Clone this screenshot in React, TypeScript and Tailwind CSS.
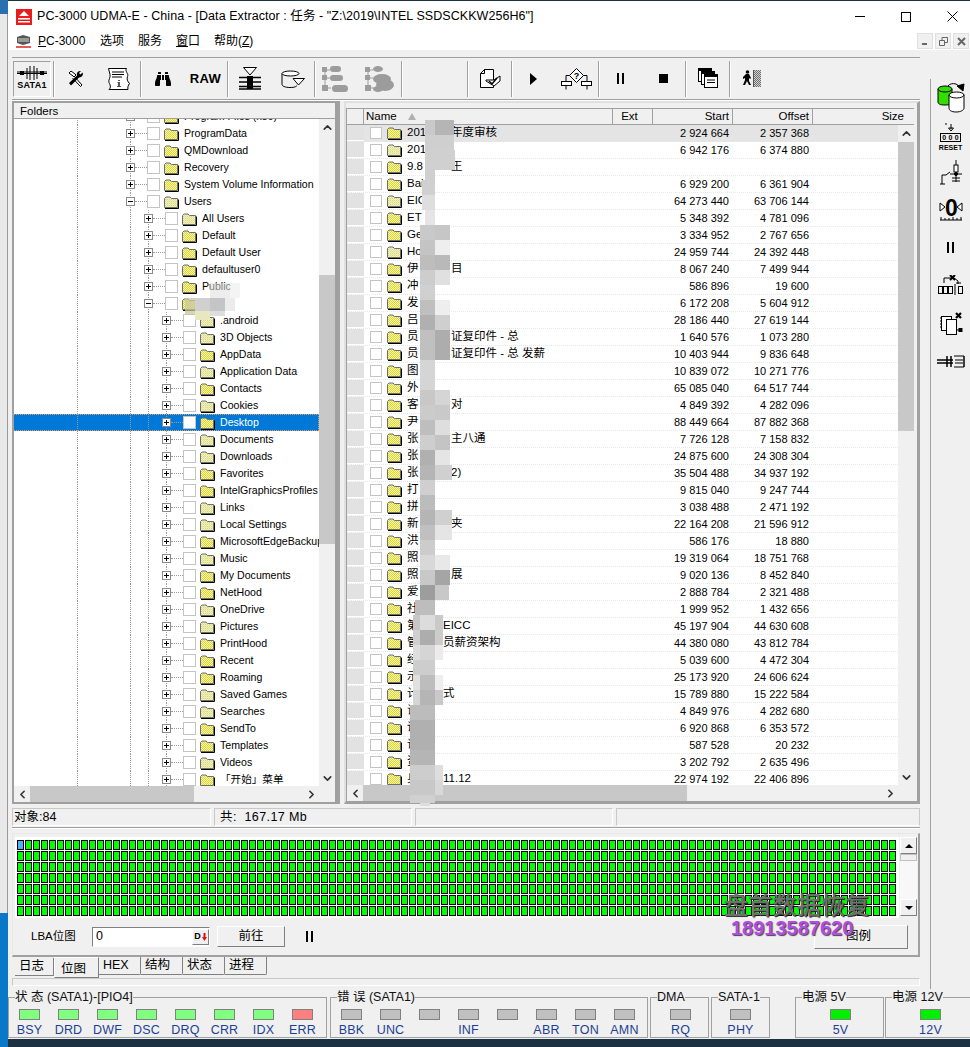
import React from 'react';
import { FaBinoculars } from 'react-icons/fa';
import { ChevronUp, ChevronDown, ChevronLeft, ChevronRight } from 'lucide-react';

const dotV = 'bg-[linear-gradient(#9a9a9a_50%,transparent_50%)] bg-[length:1px_2px] bg-repeat-y';

type TreeRow = { name: string; level: number; pale?: boolean; open?: boolean; sel?: boolean };

const treeRows: TreeRow[] = [
  { name: 'Program Files (x86)', level: 0 },
  { name: 'ProgramData', level: 0 },
  { name: 'QMDownload', level: 0 },
  { name: 'Recovery', level: 0 },
  { name: 'System Volume Information', level: 0 },
  { name: 'Users', level: 0, open: true, pale: true },
  { name: 'All Users', level: 1, pale: true },
  { name: 'Default', level: 1 },
  { name: 'Default User', level: 1 },
  { name: 'defaultuser0', level: 1 },
  { name: 'Public', level: 1 },
  { name: '', level: 1, open: true },
  { name: '.android', level: 2, pale: true },
  { name: '3D Objects', level: 2, pale: true },
  { name: 'AppData', level: 2 },
  { name: 'Application Data', level: 2, pale: true },
  { name: 'Contacts', level: 2 },
  { name: 'Cookies', level: 2, pale: true },
  { name: 'Desktop', level: 2, sel: true },
  { name: 'Documents', level: 2, pale: true },
  { name: 'Downloads', level: 2, pale: true },
  { name: 'Favorites', level: 2 },
  { name: 'IntelGraphicsProfiles', level: 2 },
  { name: 'Links', level: 2, pale: true },
  { name: 'Local Settings', level: 2, pale: true },
  { name: 'MicrosoftEdgeBackups', level: 2 },
  { name: 'Music', level: 2, pale: true },
  { name: 'My Documents', level: 2 },
  { name: 'NetHood', level: 2 },
  { name: 'OneDrive', level: 2, pale: true },
  { name: 'Pictures', level: 2, pale: true },
  { name: 'PrintHood', level: 2 },
  { name: 'Recent', level: 2 },
  { name: 'Roaming', level: 2 },
  { name: 'Saved Games', level: 2, pale: true },
  { name: 'Searches', level: 2, pale: true },
  { name: 'SendTo', level: 2 },
  { name: 'Templates', level: 2 },
  { name: 'Videos', level: 2, pale: true },
  { name: '「开始」菜单', level: 2 },
];

// name, part behind the mosaic, start, offset, pale folder
const listRows: [string, string, string, string, boolean?][] = [
  ['201', '年度审核', '2 924 664', '2 357 368'],
  ['201', '', '6 942 176', '6 374 880', true],
  ['9.8', '王', '', ''],
  ['Bai', '', '6 929 200', '6 361 904'],
  ['EIC', '', '64 273 440', '63 706 144', true],
  ['ET', '', '5 348 392', '4 781 096'],
  ['Ge', '', '3 334 952', '2 767 656'],
  ['Ho', '', '24 959 744', '24 392 448', true],
  ['伊', '目', '8 067 240', '7 499 944'],
  ['冲', '', '586 896', '19 600'],
  ['发', '', '6 172 208', '5 604 912'],
  ['吕', '', '28 186 440', '27 619 144'],
  ['员', '证复印件 - 总', '1 640 576', '1 073 280'],
  ['员', '证复印件 - 总 发薪', '10 403 944', '9 836 648'],
  ['图', '', '10 839 072', '10 271 776'],
  ['外', '', '65 085 040', '64 517 744'],
  ['客', '对', '4 849 392', '4 282 096'],
  ['尹', '', '88 449 664', '87 882 368'],
  ['张', '主八通', '7 726 128', '7 158 832'],
  ['张', '', '24 875 600', '24 308 304'],
  ['张', '2)', '35 504 488', '34 937 192'],
  ['打', '', '9 815 040', '9 247 744'],
  ['拼', '', '3 038 488', '2 471 192'],
  ['新', '夹', '22 164 208', '21 596 912'],
  ['洪', '', '586 176', '18 880'],
  ['照', '', '19 319 064', '18 751 768'],
  ['照', '展', '9 020 136', '8 452 840'],
  ['爱', '', '2 888 784', '2 321 488'],
  ['社', '', '1 999 952', '1 432 656'],
  ['第', 'EICC', '45 197 904', '44 630 608'],
  ['管', '员薪资架构', '44 380 080', '43 812 784'],
  ['经', '', '5 039 600', '4 472 304'],
  ['示', '', '25 173 920', '24 606 624'],
  ['计', '式', '15 789 880', '15 222 584'],
  ['试', '', '4 849 976', '4 282 680'],
  ['说', '', '6 920 868', '6 353 572'],
  ['议', '', '587 528', '20 232'],
  ['资', '', '3 202 792', '2 635 496'],
  ['身', '11.12', '22 974 192', '22 406 896'],
];

// privacy mosaic that covers the names in the picture: x, y, w, h, colour
const mosaic: [number, number, number, number, string][] = [
  [425, 120, 10, 15, '#c9c9c9'], [435, 120, 19, 15, '#b5b5b5'], [425, 135, 10, 15, '#cfcfcf'], [435, 135, 19, 15, '#cfcfcf'],
  [425, 150, 30, 20, '#d0d0d0'], [425, 170, 10, 10, '#cfcfcf'], [422, 180, 13, 15, '#d0d0d0'], [422, 195, 13, 15, '#dedede'],
  [425, 210, 10, 15, '#e5e5e5'], [420, 225, 15, 15, '#c9c9c9'], [435, 225, 15, 15, '#c6c6c6'], [420, 240, 15, 15, '#c4c4c4'],
  [435, 240, 15, 15, '#eeeeee'], [420, 255, 15, 15, '#bdbdbd'], [435, 255, 15, 15, '#b9b9b9'], [420, 270, 15, 15, '#cdcdcd'],
  [435, 270, 15, 15, '#e0e0e0'], [420, 285, 15, 15, '#d0d0d0'], [420, 300, 15, 15, '#bfbfbf'], [435, 300, 15, 15, '#eeeeee'],
  [420, 315, 15, 15, '#b0b0b0'], [435, 315, 15, 15, '#cfcfcf'], [420, 330, 15, 30, '#c0c0c0'], [435, 330, 15, 30, '#adadad'],
  [420, 360, 15, 30, '#d5d5d5'], [435, 390, 15, 15, '#d5d5d5'], [420, 390, 15, 15, '#c8c8c8'], [420, 405, 15, 15, '#cbcbcb'],
  [435, 405, 15, 15, '#c9c9c9'], [420, 420, 15, 15, '#bebebe'], [435, 420, 15, 15, '#dedede'], [420, 435, 15, 15, '#cecece'],
  [435, 435, 15, 15, '#c4c4c4'], [420, 450, 15, 15, '#b0b0b0'], [435, 450, 15, 15, '#e5e5e5'], [420, 465, 15, 15, '#b5b5b5'],
  [435, 465, 17, 15, '#d0d0d0'], [420, 480, 15, 15, '#cfcfcf'], [420, 495, 15, 15, '#bcbcbc'], [420, 510, 15, 15, '#b5b5b5'],
  [435, 510, 17, 15, '#d0d0d0'], [420, 525, 15, 15, '#c0c0c0'], [435, 525, 17, 15, '#e5e5e5'], [420, 540, 15, 15, '#cccccc'],
  [420, 555, 15, 15, '#d8d8d8'], [435, 555, 15, 15, '#e8e8e8'], [420, 570, 15, 15, '#c8c8c8'], [435, 570, 15, 15, '#a5a5a5'],
  [420, 585, 15, 15, '#9d9d9d'], [435, 585, 14, 15, '#c8c8c8'], [415, 600, 20, 15, '#bdbdbd'], [413, 615, 7, 15, '#c6c6c6'],
  [420, 615, 15, 15, '#dcdcdc'], [435, 615, 8, 15, '#c9c9c9'], [413, 630, 7, 15, '#cfcfcf'], [420, 630, 15, 15, '#adadad'],
  [435, 630, 8, 15, '#cccccc'], [413, 645, 7, 15, '#dedede'], [420, 645, 15, 15, '#d5d5d5'], [435, 645, 8, 15, '#ebebeb'],
  [413, 660, 22, 15, '#cdcdcd'], [413, 675, 7, 15, '#e0e0e0'], [420, 675, 15, 15, '#bdbdbd'], [435, 675, 8, 15, '#eeeeee'],
  [413, 690, 7, 15, '#d5d5d5'], [420, 690, 15, 15, '#b5b5b5'], [435, 690, 8, 15, '#c9c9c9'], [410, 705, 25, 15, '#bcbcbc'],
  [410, 720, 25, 30, '#b0b0b0'], [410, 750, 25, 15, '#b5b5b5'], [410, 765, 25, 15, '#cdcdcd'], [435, 765, 8, 15, '#dedede'],
  [410, 780, 25, 15, '#c8c8c8'], [435, 780, 8, 15, '#d8d8d8'], [410, 795, 25, 8, '#d0d0d0'], [420, 803, 10, 3, '#dddddd'],
  // over the tree
  [210, 283, 20, 15, '#e0e0e090'], [230, 283, 10, 15, '#f0f0f0c0'], [185, 298, 10, 17, '#c8c8a0c0'], [195, 298, 15, 13, '#d0d0d0'],
  [210, 298, 15, 13, '#c5c5c5'], [225, 298, 10, 13, '#ececec'], [195, 311, 15, 9, '#e8e8c0'], [210, 311, 15, 5, '#dddddd'],
];

const Folder = ({ pale }: { pale?: boolean }) => (
  <svg width="16" height="14" viewBox="0 0 16 14" className="shrink-0">
    <path d="M1.5 12.5V3.5L3 2h4l1.5 1.5h6v9z" fill={pale ? 'url(#dPale)' : 'url(#dYel)'} stroke="#6e6e6e" />
    <path d="M2 13.5h13.5V4.5" fill="none" stroke="#000" />
  </svg>
);

const Check = ({ size = 13 }: { size?: number }) => (
  <div className="shrink-0 bg-white border border-[#c4c4c4]" style={{ width: size, height: size }} />
);

const Expander = ({ open }: { open?: boolean }) => (
  <div className={`w-[9px] h-full flex items-center justify-center shrink-0 ${dotV} bg-[position:4px_0]`}>
    <div className="w-[9px] h-[9px] bg-white border border-[#8a8a8a] relative flex items-center justify-center">
      <div className="w-[5px] h-px bg-black" />
      {!open && <div className="absolute w-px h-[5px] bg-black" />}
    </div>
  </div>
);

const TreeItem = ({ row }: { row: TreeRow }) => (
  <div
    className={`flex h-[17px] items-center pl-[63px] ${
      row.sel ? 'bg-[#0078d7] text-white outline outline-1 -outline-offset-1 outline-dotted outline-[#e8a060]' : ''
    }`}
  >
    <div className={`w-[50px] h-full shrink-0 ${dotV} bg-[position:1px_0]`} />
    {row.level >= 1 && <div className={`w-[18px] h-full shrink-0 ${dotV} bg-[position:4px_0]`} />}
    {row.level >= 2 && <div className={`w-[18px] h-full shrink-0 ${dotV} bg-[position:4px_0]`} />}
    <Expander open={row.open} />
    <div className="w-[12px] h-px border-t border-dotted border-[#9a9a9a] shrink-0" />
    <Check />
    <div className="w-[3px] shrink-0" />
    <Folder pale={row.pale} />
    <span className="ml-[5px] whitespace-nowrap text-[10.6px]">{row.name}</span>
  </div>
);

const ScrollCap = ({ children }: { children: React.ReactNode }) => (
  <div className="w-[16px] h-[16px] shrink-0 flex items-center justify-center text-[#333]">{children}</div>
);

const VScroll = ({ top, thumb }: { top: number; thumb: number }) => (
  <div className="w-[16px] h-full flex flex-col bg-[#f0f0f0] shrink-0">
    <ScrollCap><ChevronUp size={13} strokeWidth={3} /></ScrollCap>
    <div className="flex-1 min-h-0">
      <div className="bg-[#c8c8c8]" style={{ marginTop: top, height: thumb }} />
    </div>
    <ScrollCap><ChevronDown size={13} strokeWidth={3} /></ScrollCap>
  </div>
);

const HScroll = ({ left, thumb }: { left: number; thumb: number }) => (
  <div className="h-[16px] flex bg-[#f0f0f0] shrink-0 flex-1 min-w-0">
    <ScrollCap><ChevronLeft size={13} strokeWidth={3} /></ScrollCap>
    <div className="flex-1 min-w-0">
      <div className="bg-[#c8c8c8] h-full" style={{ marginLeft: left, width: thumb }} />
    </div>
    <ScrollCap><ChevronRight size={13} strokeWidth={3} /></ScrollCap>
  </div>
);

const Sata = () => (
  <svg width="32" height="14" viewBox="0 0 32 14">
    <path d="M1 6h30M1 7.5h30" stroke="#000" strokeWidth="1.2" />
    <path d="M11 2v11M14 0v14M18 0v14M21 2v11" stroke="#000" />
    <rect x="4" y="5" width="4" height="4" fill="#000" />
    <rect x="24" y="5" width="4" height="4" fill="#000" />
  </svg>
);

const ToolsIcon = () => (
  <svg width="17" height="17" viewBox="0 0 17 17">
    <path d="M2 3l2-2 4 3 1 1-2 2-1-1zM7 6l8 9-1.500 1.500L5.500 8" fill="#fff" stroke="#000" />
    <path d="M15.500 2.500l-2 2-1.500-1.500 2-2a3.500 3.500 0 0 0-4 4.500L2 13l2 2.500 8-8a3.500 3.500 0 0 0 3.500-5z" fill="#000" />
  </svg>
);

const ScrollIcon = () => (
  <svg width="24" height="24" viewBox="0 0 24 24" fill="none" stroke="#000">
    <path d="M1.500 1.500h18c-2 3 2.500 5 1 8-1 2.500 0 5 2 7-1.500 2-2 4-1.500 6h-19c2.500-2 1-5 0-7-1-3 2-5 1-8-.5-2-1-4-1.500-6z" fill="#fff" />
    <path d="M5 5h12M5 7.500h12M5 10h10" />
    <path d="M11 13h2v1h-2zM10.500 15h2.500v4h1v1h-4v-1h1v-3h-.5z" fill="#555" stroke="none" />
  </svg>
);

const FunnelStack = () => (
  <svg width="24" height="24" viewBox="0 0 24 24" fill="none" stroke="#000">
    <path d="M5.500.5h13L12 8z" fill="#fff" />
    <path d="M1 10.500h22M1 15h22M1 19.500h22" strokeWidth="1.700" />
    <rect x="9" y="9" width="6" height="13" fill="#000" stroke="none" />
    <path d="M1 22h22" strokeWidth="1.500" />
  </svg>
);

const CylFunnel = () => (
  <svg width="24" height="18" viewBox="0 0 24 18" fill="none" stroke="#000">
    <path d="M1 3.500v11c0 1.500 3 3 8 3s6-1 7-2" />
    <ellipse cx="9.500" cy="3.500" rx="8.500" ry="2.500" fill="#fff" />
    <path d="M12 8.500h11.500L17.500 15z" fill="#fff" />
  </svg>
);

const Tree1 = ({ blob }: { blob?: boolean }) => (
  <svg width="30" height="30" viewBox="0 0 30 30">
    <g fill="#9c9c9c">
      <path d="M3 3v20M3 6h5M3 14h5M3 24h6" stroke="#9c9c9c" fill="none" />
      <rect x="0" y="3" width="5" height="5" />
      <rect x="0" y="11" width="5" height="5" />
      <rect x="0" y="21" width="6" height="6" />
      {blob ? (
        <>
          <ellipse cx="13" cy="5" rx="5" ry="3" />
          <ellipse cx="17" cy="15" rx="9" ry="5" />
          <ellipse cx="20" cy="21" rx="9" ry="6" />
          <ellipse cx="13" cy="25" rx="5" ry="3" />
        </>
      ) : (
        <>
          <rect x="8" y="2" width="11" height="6" rx="3" />
          <rect x="8" y="11" width="13" height="6" rx="3" />
          <rect x="10" y="21" width="16" height="7" rx="3.500" />
        </>
      )}
    </g>
  </svg>
);

const PageCheck = () => (
  <svg width="22" height="22" viewBox="0 0 22 22" fill="none" stroke="#000">
    <path d="M1.500 5.500l4-4h9v18h-13z" fill="#fff" />
    <path d="M1.500 5.500h4v-4" />
    <path d="M7 12h8l6-4v5l-6 5-8-5z" fill="#fff" />
    <path d="M10 13l3 3 5-6" strokeWidth="1.500" />
  </svg>
);

const Diamond = () => (
  <svg width="31" height="22" viewBox="0 0 31 22" fill="none" stroke="#000">
    <path d="M15.500.5l7 7-7 7-7-7z" fill="#fff" />
    <path d="M8.500 7.500H5v6M22.500 7.500H26v6" />
    <rect x="0.500" y="13.500" width="10" height="4" fill="#fff" />
    <rect x="20.500" y="13.500" width="10" height="4" fill="#fff" />
    <path d="M5 17.500v4M26 17.500v4" />
    <text x="12.800" y="11" fontSize="9" fontWeight="700" fill="#000" stroke="none">?</text>
  </svg>
);

const Windows = () => (
  <svg width="20" height="21" viewBox="0 0 20 21" fill="none" stroke="#000">
    {[0, 3, 6].map((o) => (
      <g key={o} transform={`translate(${o} ${o})`}>
        <rect x="0.500" y="0.500" width="13" height="13" fill="#fff" />
        <rect x="0" y="0" width="14" height="3" fill="#000" stroke="none" />
        <path d="M3 6h8M3 8.500h8" />
      </g>
    ))}
  </svg>
);

const Runner = () => (
  <svg width="20" height="18" viewBox="0 0 20 18">
    <rect x="11" y="0" width="8" height="17" fill="url(#dGray)" />
    <path d="M11 0h1v17h-1z" fill="#555" />
    <circle cx="5.500" cy="2" r="1.800" />
    <path d="M4 4h3l2 4-1 1-1-1v3l2 4H7l-2-4-2 4H1l2-5V8L1 9V7z" />
  </svg>
);

const Db = () => (
  <svg width="28" height="30" viewBox="0 0 28 30" fill="none" stroke="#000">
    <path d="M1 6v13c0 2 2 3 7 3s7-1 7-3V6z" fill="#33dd00" />
    <ellipse cx="8" cy="6" rx="7" ry="3" fill="#33dd00" />
    <path d="M11 3c1-2 5-3 8-2l3 2" />
    <path d="M27 1l-1 7-6-5z" fill="#000" />
    <path d="M12 12v13c0 2 2 4 7 4s8-2 8-4V12z" fill="#fff" />
    <ellipse cx="19.500" cy="12" rx="7.500" ry="3" fill="#fff" />
  </svg>
);

const Reset = () => (
  <div className="flex flex-col items-center leading-none w-[24px]">
    <svg width="24" height="10" viewBox="0 0 24 10" fill="none" stroke="#000">
      <path d="M7 0v2M12 1v5M9.500 5h5L12 8z" />
    </svg>
    <div className="border border-black flex w-[21px] h-[9px] text-[7px] font-bold justify-around items-center">
      <span>0</span><span>0</span><span>0</span>
    </div>
    <span className="text-[7px] font-bold mt-[2px]">RESET</span>
  </div>
);

const Switch = () => (
  <svg width="24" height="25" viewBox="0 0 24 25" fill="none" stroke="#000">
    <path d="M1 24h5M3 24v-9h4l4-3" />
    <path d="M17 0v6M17 12v10" />
    <rect x="15" y="5" width="4" height="7" fill="#fff" />
    <path d="M11 14h12M13 18h8M13 21h8" />
    <circle cx="17" cy="14" r="1.500" fill="#000" />
  </svg>
);

const ZeroRuler = () => (
  <svg width="24" height="27" viewBox="0 0 24 27" fill="none" stroke="#000">
    <text x="6" y="20" fontSize="23" fontWeight="700" fill="#000" stroke="none">0</text>
    <path d="M1 7l5 4-5 4zM23 7l-5 4 5 4z" fill="#fff" />
    <path d="M1 24h22M2 21v3M6 22v2M10 22v2M14 21v3M18 22v2M22 21v3" />
  </svg>
);

const Cells = () => (
  <svg width="25" height="20" viewBox="0 0 25 20" fill="none" stroke="#000">
    <path d="M6 8V3h9M16 3l4 3v3" />
    <path d="M12 0l5 5M17 0l-5 5" strokeWidth="2" />
    <path d="M18 8h5" />
    {[0, 5, 10, 20].map((x) => (
      <rect key={x} x={x + 0.5} y="11.500" width="4" height="7" />
    ))}
    <path d="M17 9v11" />
  </svg>
);

const Copies = () => (
  <svg width="24" height="24" viewBox="0 0 24 24" fill="none" stroke="#000">
    <path d="M1 6h1M1 9h1M1 12h1M1 15h1" />
    <rect x="2.500" y="4.500" width="10" height="14" fill="#fff" />
    <rect x="7.500" y="7.500" width="10" height="15" fill="#fff" />
    <path d="M17.500 18h4" />
    <rect x="20" y="16.500" width="3" height="3" fill="#000" />
    <path d="M17 1l5 5M22 1l-5 5" strokeWidth="2.200" />
  </svg>
);

const Connector = () => (
  <svg width="28" height="13" viewBox="0 0 28 13" fill="none" stroke="#000">
    <path d="M0 5h16M0 8h16" strokeWidth="1.500" />
    <path d="M10 1v11M14 1v11" strokeWidth="1.500" />
    <path d="M17 1h10v11H17M27 1v11M18 5h8M18 8h8" />
  </svg>
);

const Pause = () => (
  <div className="flex gap-[3px]">
    <div className="w-[2px] h-[11px] bg-black" />
    <div className="w-[2px] h-[11px] bg-black" />
  </div>
);

const Btn = ({ children }: { children: React.ReactNode }) => (
  <div className="w-[43px] h-full flex items-center justify-center shrink-0">{children}</div>
);

const Group = ({ children, wide }: { children: React.ReactNode; wide?: boolean }) => (
  <div className={`flex h-[36px] border-r border-[#a0a0a0] shadow-[1px_0_0_#fff] ${wide ? 'w-[66px]' : ''}`}>{children}</div>
);

type Led = { label: string; tone: string };

const Leds = ({ leds, step = 39 }: { leds: Led[]; step?: number }) => (
  <div className="flex mt-[5px]">
    {leds.map((l, i) => (
      <div key={i} className="flex flex-col items-center" style={{ width: step }}>
        <div className={`w-[21px] h-[11px] border border-[#808080] ${l.tone}`} />
        <span className="text-[#1c3f94] text-[12.500px] leading-[14px] mt-[3px] h-[14px] tracking-[0.2px]">{l.label}</span>
      </div>
    ))}
  </div>
);

const Fs = ({
  title,
  className,
  inset = 1,
  children,
}: {
  title: string;
  className: string;
  inset?: number;
  children: React.ReactNode;
}) => (
  <fieldset className={`border border-[#a0a0a0] h-[47px] shrink-0 ${className}`}>
    <legend className="ml-[6px] leading-[13px] text-[12.500px] whitespace-nowrap text-[#111]">{title}</legend>
    <div style={{ paddingLeft: inset }}>{children}</div>
  </fieldset>
);

const green = 'bg-[#80ff80]';
const gray = 'bg-[#c0c0c0]';

export default function App() {
  const cells = Array.from({ length: 770 }, (_, i) => i);

  return (
    <div className="relative w-[970px] h-[1047px] overflow-hidden bg-[#1c3142] flex font-['Liberation_Sans','Noto_Sans_CJK_SC',sans-serif] text-[11px] text-black">
      <svg width="0" height="0" className="absolute">
        <defs>
          <pattern id="dYel" width="2" height="2" patternUnits="userSpaceOnUse">
            <rect width="2" height="2" fill="#ffff66" />
            <rect width="1" height="1" fill="#c8c8a8" />
            <rect x="1" y="1" width="1" height="1" fill="#e0d050" />
          </pattern>
          <pattern id="dPale" width="2" height="2" patternUnits="userSpaceOnUse">
            <rect width="2" height="2" fill="#f4f4a8" />
            <rect width="1" height="1" fill="#cfcfc0" />
            <rect x="1" y="1" width="1" height="1" fill="#e8e890" />
          </pattern>
          <pattern id="dGray" width="2" height="2" patternUnits="userSpaceOnUse">
            <rect width="2" height="2" fill="#d0d0d0" />
            <rect width="1" height="1" fill="#707070" />
            <rect x="1" y="1" width="1" height="1" fill="#707070" />
          </pattern>
        </defs>
      </svg>

      {/* desktop behind the window */}
      <div className="w-[8px] shrink-0 flex flex-col">
        <div className="h-[14px] bg-[#2a6fb0]" />
        <div className="h-[899px] bg-[#e8e8e8] border-r border-[#999]" />
        <div className="flex-1 bg-[#0a78c8]" />
      </div>

      <div className="w-[962px] h-[1038px] mt-px bg-[#f0f0f0] flex flex-col">
        {/* title bar */}
        <div className="h-[31px] bg-white flex items-center shrink-0 text-[12.500px] pl-[8px]">
          <svg width="16" height="16" viewBox="0 0 16 16" className="shrink-0">
            <rect width="16" height="16" fill="#e81c1c" />
            <path d="M8 2l5 5H3zM2 9h12v1.500H2zM2 12h12v1.500H2z" fill="#fff" />
          </svg>
          <span className="ml-[5px] whitespace-nowrap tracking-[0.06px]">
            PC-3000 UDMA-E - China - [Data Extractor : 任务 - "Z:\2019\INTEL SSDSCKKW256H6"]
          </span>
          <div className="ml-auto flex items-center h-full">
            <div className="w-[46px] flex justify-center"><div className="w-[10px] h-px bg-black" /></div>
            <div className="w-[46px] mr-[5px] flex justify-center"><div className="w-[10px] h-[10px] border border-black" /></div>
            <div className="w-[36px] flex justify-center">
              <svg width="11" height="11" viewBox="0 0 11 11" stroke="#000"><path d="M.5.500l10 10M10.500.500l-10 10" /></svg>
            </div>
          </div>
        </div>

        {/* menu bar */}
        <div className="h-[18px] bg-white flex items-center shrink-0 text-[12px] pl-[8px]">
          <svg width="15" height="14" viewBox="0 0 15 14" className="shrink-0">
            <path d="M1 3l6-2 7 2v6l-7 2-6-2z" fill="#555" />
            <path d="M2 5h11M2 7h11" stroke="#ddd" />
            <path d="M0 13h15" stroke="#d22" strokeWidth="1.500" />
          </svg>
          <span className="ml-[7px] w-[62px]"><u>P</u>C-3000</span>
          <span className="w-[38px]">选项</span>
          <span className="w-[38px]">服务</span>
          <span className="w-[38px]"><u>窗</u>口</span>
          <span className="flex-1">帮助(<u>Z</u>)</span>
          <div className="flex gap-[2px] mr-px self-start mt-px">
            {[0, 1, 2].map((i) => (
              <div key={i} className="w-[16px] h-[16px] bg-[#f0f0f0] border border-[#e0e0e0] flex items-center justify-center">
                <svg width="9" height="9" viewBox="0 0 9 9" fill="none" stroke="#666" strokeWidth={i === 2 ? 2 : 1}>
                  {i === 0 && <path d="M1 7h5" strokeWidth="2" />}
                  {i === 1 && <path d="M.5 3.500h5v5h-5zM3 3V.5h5.500v5H6" />}
                  {i === 2 && <path d="M1 1l7 7M8 1l-7 7" />}
                </svg>
              </div>
            ))}
          </div>
        </div>

        <div className="flex-1 min-h-0 flex">
          {/* work area */}
          <div className="w-[912px] pl-[4px] flex flex-col shrink-0">
            {/* toolbar */}
            <div className="h-[51px] shrink-0 pt-[7px]">
              <div className="border-t border-[#a0a0a0] shadow-[0_1px_0_#fff] h-[43px] border-b flex items-center">
                <div className="h-[36px] flex items-center border-r border-[#a0a0a0] shadow-[1px_0_0_#fff] w-[42px]">
                  <div className="w-[38px] h-[36px] ml-px border border-[#a0a0a0] border-r-white border-b-white flex flex-col items-center justify-center">
                    <Sata />
                    <span className="font-bold text-[9px] leading-[11px] tracking-[0.3px]">SATA1</span>
                  </div>
                </div>
                <Group><Btn><ToolsIcon /></Btn><Btn><ScrollIcon /></Btn></Group>
                <Group><Btn><FaBinoculars size={16} /></Btn><Btn><span className="font-bold text-[13px] tracking-[0.4px]">RAW</span></Btn></Group>
                <Group><Btn><FunnelStack /></Btn><Btn><CylFunnel /></Btn></Group>
                <Group><Btn><Tree1 /></Btn><Btn><Tree1 blob /></Btn></Group>
                <Group wide><div /></Group>
                <Group><Btn><PageCheck /></Btn></Group>
                <Group>
                  <Btn><div className="border-l-[7px] border-y-[6px] border-y-transparent border-l-black" /></Btn>
                  <Btn><Diamond /></Btn>
                </Group>
                <Group>
                  <Btn><Pause /></Btn>
                  <Btn><div className="w-[9px] h-[9px] bg-black" /></Btn>
                </Group>
                <Group><Btn><Windows /></Btn></Group>
                <Btn><Runner /></Btn>
              </div>
            </div>

            {/* panels */}
            <div className="h-[703px] shrink-0 flex">
              {/* folders */}
              <div className="w-[325px] h-full border-2 border-[#a0a0a0] flex flex-col bg-white shrink-0">
                <div className="h-[16px] bg-[#f0f0f0] border-b border-[#a0a0a0] shrink-0 pl-[6px] leading-[16px] text-[11.500px]">Folders</div>
                <div className="flex-1 min-h-0 flex">
                  <div className="w-[305px] overflow-hidden shrink-0">
                    <div className="-mt-[11px] -ml-px">
                      {treeRows.map((r) => (
                        <TreeItem key={r.name + r.level} row={r} />
                      ))}
                    </div>
                  </div>
                  <VScroll top={140} thumb={269} />
                </div>
                <div className="flex bg-[#f0f0f0] shrink-0">
                  <HScroll left={0} thumb={164} />
                  <div className="w-[16px] shrink-0" />
                </div>
              </div>

              {/* splitter */}
              <div className="w-[7px] shrink-0 flex"><div className="w-[3px] h-full bg-[#a0a0a0]" /></div>

              {/* file list */}
              <div className="w-[576px] h-full border-2 border-r-[3px] border-b-[3px] border-[#a0a0a0] border-t-[#e0e0e0] border-l-[#e0e0e0] pt-[5px] pr-[3px] shrink-0">
                <div className="h-full border-l border-t border-[#a0a0a0] flex flex-col bg-white">
                  <div className="h-[16px] flex shrink-0 bg-[#f0f0f0] border-b border-[#a0a0a0] text-[11.500px] leading-[15px]">
                    <div className="w-[17px] border-r border-[#a0a0a0] shrink-0" />
                    <div className="w-[249px] border-r border-[#a0a0a0] pl-[2px] flex items-center gap-[11px] shrink-0">
                      Name
                      <div className="border-b-[7px] border-x-[4px] border-x-transparent border-b-[#b0b0b0]" />
                    </div>
                    <div className="w-[40px] border-r border-[#a0a0a0] text-center shrink-0 pr-[6px]">Ext</div>
                    <div className="w-[80px] border-r border-[#a0a0a0] text-right pr-[3px] shrink-0">Start</div>
                    <div className="w-[80px] border-r border-[#a0a0a0] text-right pr-[3px] shrink-0">Offset</div>
                    <div className="flex-1 text-right pr-[10px]">Size</div>
                  </div>
                  <div className="flex-1 min-h-0 flex">
                    <div className="flex-1 min-w-0 overflow-hidden">
                      {listRows.map((r, i) => (
                        <div key={i} className={`h-[17px] flex items-center border-b border-dotted border-[#e8e8e8] ${i === 0 ? 'bg-[#e4e4e4]' : ''}`}>
                          <div className="w-[17px] h-full bg-[#e2e2e2] border-b border-white shrink-0" />
                          <div className="w-[249px] h-full flex items-center pl-[6px] shrink-0 whitespace-nowrap overflow-hidden text-[11.500px]">
                            <Check size={12} />
                            <div className="w-[4px] shrink-0" />
                            <Folder pale={r[4]} />
                            <span className="ml-[5px] w-[44px] shrink-0">{r[0]}</span>
                            <span className={i >= 29 ? '-ml-[8px]' : ''}>{r[1]}</span>
                          </div>
                          <div className="w-[40px] shrink-0" />
                          <div className="w-[80px] text-right pr-[4px] shrink-0">{r[2]}</div>
                          <div className="w-[80px] text-right pr-[4px] shrink-0">{r[3]}</div>
                        </div>
                      ))}
                    </div>
                    <VScroll top={1} thumb={289} />
                  </div>
                  <div className="flex shrink-0 bg-[#f0f0f0]">
                    <HScroll left={0} thumb={324} />
                    <div className="w-[16px] shrink-0" />
                  </div>
                </div>
              </div>
            </div>

            {/* status line */}
            <div className="mt-[4px] h-[20px] shrink-0 flex border-b border-[#a0a0a0] shadow-[0_1px_0_#fff] text-[12.500px] leading-[17px]">
              <div className="w-[199px] h-[18px] border border-[#c8c8c8] border-r-white border-b-white pl-px">对象:84</div>
              <div className="w-[198px] ml-[3px] h-[18px] border border-[#c8c8c8] border-r-white border-b-white pl-[5px] whitespace-pre tracking-[0.4px]">共:  167.17 Mb</div>
              <div className="w-[198px] ml-[3px] h-[18px] border border-[#c8c8c8] border-r-white border-b-white" />
              <div className="flex-1 ml-[3px] h-[18px] border border-[#c8c8c8] border-b-white" />
            </div>

            {/* bitmap panel */}
            <div className="mt-[5px] h-[124px] shrink-0 border border-[#e8e8e8] border-r-[2px] border-b-[2px] border-r-[#a0a0a0] border-b-[#a0a0a0] flex flex-col pl-[2px] pt-[3px]">
              <div className="flex h-[81px] shrink-0">
                <div className="w-[884px] h-[81px] bg-white pl-[2px] pt-[3px] shrink-0">
                  <div className="grid grid-cols-[repeat(110,7px)] auto-rows-[10px] gap-px">
                    {cells.map((i) => (
                      <div key={i} className={`border border-black ${i === 0 ? 'bg-[#55aaff]' : 'bg-[#00ff00]'}`} />
                    ))}
                  </div>
                </div>
                <div className="w-[17px] ml-px h-[79px] flex flex-col shrink-0">
                  <div className="h-[17px] bg-[#f0f0f0] border border-white border-r-[#808080] border-b-[#808080] flex items-center justify-center">
                    <div className="border-b-[4px] border-x-[4px] border-x-transparent border-b-black" />
                  </div>
                  <div className="h-[7px] bg-[#f0f0f0] border border-[#c0c0c0]" />
                  <div className="flex-1 bg-[#f8f8f8]" />
                  <div className="h-[17px] bg-[#f0f0f0] border border-white border-r-[#808080] border-b-[#808080] flex items-center justify-center">
                    <div className="border-t-[4px] border-x-[4px] border-x-transparent border-t-black" />
                  </div>
                </div>
              </div>
              <div className="flex-1 flex items-center text-[12.500px]">
                <span className="ml-[16px] w-[61px] whitespace-nowrap text-[11.500px]">LBA位图</span>
                <div className="w-[118px] h-[20px] bg-white border border-[#808080] border-r-white border-b-white pl-[3px] flex items-center">
                  <span className="flex-1">0</span>
                  <div className="w-[17px] h-[16px] bg-[#f0f0f0] border border-white border-r-[#808080] border-b-[#808080] flex items-center justify-center gap-px text-[9px] font-bold">
                    D
                    <svg width="5" height="8" viewBox="0 0 5 8"><path d="M1.500 0h2v4H5L2.500 8 0 4h1.500z" fill="#e01010" /></svg>
                  </div>
                </div>
                <div className="ml-[7px] w-[68px] h-[21px] bg-[#f0f0f0] border border-white border-r-[#808080] border-b-[#808080] flex items-center justify-center">前往</div>
                <div className="ml-[21px]"><Pause /></div>
                <div className="ml-auto mr-[10px] w-[94px] h-[24px] border border-white border-r-[#808080] border-b-[#808080] flex items-center pl-[31px]">图例</div>
              </div>
            </div>

            {/* tabs */}
            <div className="h-[21px] shrink-0 flex pl-[3px] text-[12.500px]">
              <div className="w-[39px] h-[18px] mt-px border-r border-b border-[#808080] pl-[4px] leading-[17px]">日志</div>
              <div className="w-[45px] h-[21px] border border-white border-r-[#808080] border-b-[#808080] pl-[6px] pt-[3px] leading-[17px] bg-[#f0f0f0]">位图</div>
              {['HEX', '结构', '状态', '进程'].map((t) => (
                <div key={t} className="w-[42px] h-[18px] border-r border-b border-[#808080] pl-[4px] leading-[16px] rounded-br-[2px]">{t}</div>
              ))}
            </div>
            <div className="h-[8px] shrink-0 border border-[#c8c8c8] border-r-white border-b-white" />
          </div>

          {/* right rail */}
          <div className="flex-1 min-w-0 pt-[29px] pl-[10px]">
            <div className="h-[910px] border-l border-[#a0a0a0] flex flex-col items-center pt-[4px]">
              <Db />
              <div className="h-[10px]" />
              <Reset />
              <div className="h-[9px]" />
              <Switch />
              <div className="h-[11px]" />
              <ZeroRuler />
              <div className="h-[19px]" />
              <Pause />
              <div className="h-[22px]" />
              <Cells />
              <div className="h-[17px]" />
              <Copies />
              <div className="h-[19px]" />
              <Connector />
            </div>
          </div>
        </div>

        {/* indicator groups */}
        <div className="h-[48px] shrink-0 flex items-start">
          <Fs title="状 态 (SATA1)-[PIO4]" className="w-[319px]">
            <Leds leds={[
              { label: 'BSY', tone: green }, { label: 'DRD', tone: green }, { label: 'DWF', tone: green }, { label: 'DSC', tone: green },
              { label: 'DRQ', tone: green }, { label: 'CRR', tone: green }, { label: 'IDX', tone: green }, { label: 'ERR', tone: 'bg-[#ff8080]' },
            ]} />
          </Fs>
          <Fs title="错 误 (SATA1)" className="ml-[3px] w-[318px]">
            <Leds leds={[
              { label: 'BBK', tone: gray }, { label: 'UNC', tone: gray }, { label: '', tone: gray }, { label: 'INF', tone: gray },
              { label: '', tone: gray }, { label: 'ABR', tone: gray }, { label: 'TON', tone: gray }, { label: 'AMN', tone: gray },
            ]} />
          </Fs>
          <Fs title="DMA" className="ml-[2px] w-[59px]" inset={10}>
            <Leds leds={[{ label: 'RQ', tone: gray }]} />
          </Fs>
          <Fs title="SATA-1" className="ml-[2px] w-[59px]" inset={9}>
            <Leds leds={[{ label: 'PHY', tone: gray }]} />
          </Fs>
          <Fs title="电源 5V" className="ml-[25px] w-[89px]" inset={25}>
            <Leds leds={[{ label: '5V', tone: 'bg-[#00f000]' }]} />
          </Fs>
          <Fs title="电源 12V" className="ml-px w-[85px] border-r-0" inset={25}>
            <Leds leds={[{ label: '12V', tone: 'bg-[#00f000]' }]} />
          </Fs>
        </div>
      </div>

      {/* privacy mosaic */}
      {mosaic.map(([x, y, w, h, c], i) => (
        <div key={i} className="absolute" style={{ left: x, top: y, width: w, height: h, background: c }} />
      ))}

      {/* watermark */}
      <div className="absolute left-[724px] top-[892px] flex flex-col items-start font-['Noto_Sans_CJK_SC',sans-serif] leading-none">
        <span className="text-[24px] font-medium text-[#707070] [text-shadow:1px_1px_1px_#222] tracking-[0.3px]">盘首数据恢复</span>
        <span className="ml-[7px] mt-[2px] text-[20px] font-bold text-[#b04ce8] [text-shadow:1px_1px_1px_#444] font-['Liberation_Sans',sans-serif]">18913587620</span>
      </div>
    </div>
  );
}
